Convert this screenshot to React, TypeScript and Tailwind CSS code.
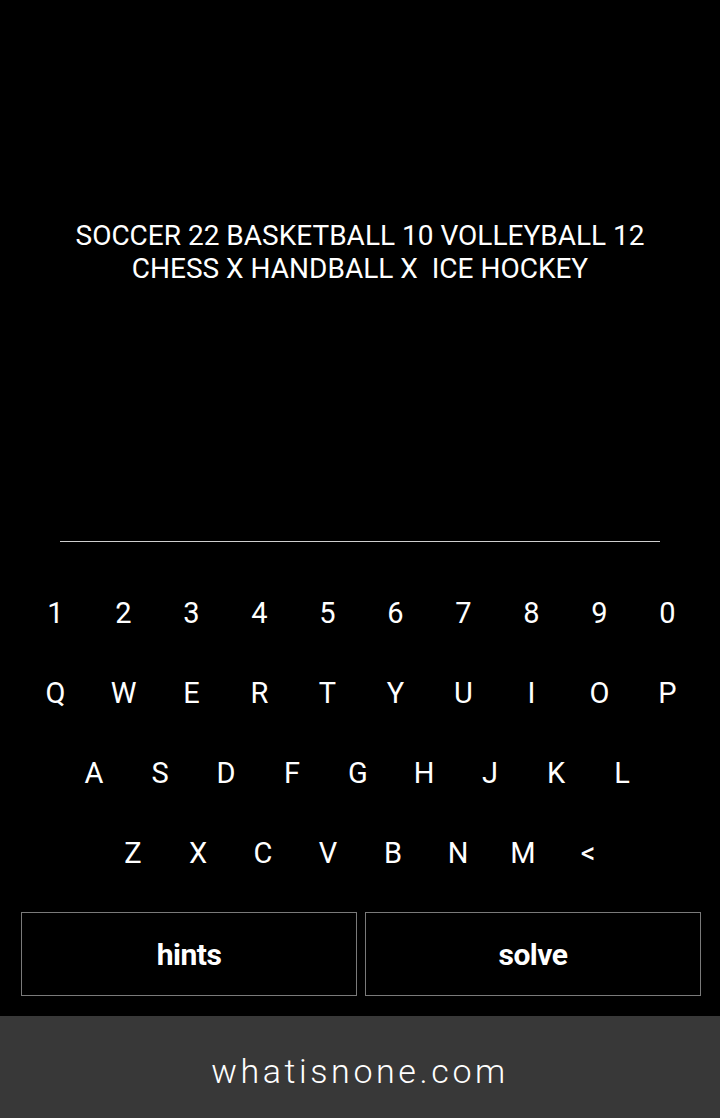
import { useState } from 'react'

const rows = [
  { keys: ['1', '2', '3', '4', '5', '6', '7', '8', '9', '0'], cls: 'pl-[3px]', w: 'w-[68px]' },
  { keys: ['Q', 'W', 'E', 'R', 'T', 'Y', 'U', 'I', 'O', 'P'], cls: 'pl-[3px]', w: 'w-[68px]' },
  { keys: ['A', 'S', 'D', 'F', 'G', 'H', 'J', 'K', 'L'], cls: 'pr-[4px]', w: 'w-[66px]' },
  { keys: ['Z', 'X', 'C', 'V', 'B', 'N', 'M', '<'], cls: 'pl-[1px]', w: 'w-[65px]' },
]

export default function App() {
  const [answer, setAnswer] = useState('')

  const press = (k: string) => {
    if (k === '<') setAnswer((a) => a.slice(0, -1))
    else setAnswer((a) => a + k)
  }

  return (
    <div className="flex flex-col min-h-[1118px] w-[720px] bg-black text-white font-['Roboto',sans-serif]">
      <div className="flex flex-col items-center pt-[219px] h-[512px]">
        <p className="text-center text-[28px] leading-[33px]">
          SOCCER 22 BASKETBALL 10 VOLLEYBALL 12
          <br />
          CHESS X HANDBALL X&nbsp; ICE HOCKEY
        </p>
      </div>

      <div className="flex justify-center">
        <div className="w-[600px] h-[30px] border-b border-[#cfcfcf] text-center text-[26px]">{answer}</div>
      </div>

      <div className="flex flex-col pt-[32px]">
        {rows.map((row, i) => (
          <div key={i} className={`flex justify-center h-[80px] ${row.cls}`}>
            {row.keys.map((k) => (
              <button
                key={k}
                onClick={() => press(k)}
                className={`${row.w} h-[80px] flex items-center justify-center text-[29px]`}
              >
                {k}
              </button>
            ))}
          </div>
        ))}
      </div>

      <div className="flex gap-[8px] pl-[21px] pr-[19px] pt-[18px]">
        <button className="flex-1 h-[84px] border border-[#7a7a7a] flex items-center justify-center text-[30px] font-bold tracking-[-0.5px]">
          hints
        </button>
        <button className="flex-1 h-[84px] border border-[#7a7a7a] flex items-center justify-center text-[30px] font-bold tracking-[-0.5px]">
          solve
        </button>
      </div>

      <div className="mt-[20px] h-[102px] pt-[9px] bg-[#383838] flex items-center justify-center">
        <span className="text-[34px] font-light tracking-[3.6px] text-white">whatisnone.com</span>
      </div>
    </div>
  )
}
